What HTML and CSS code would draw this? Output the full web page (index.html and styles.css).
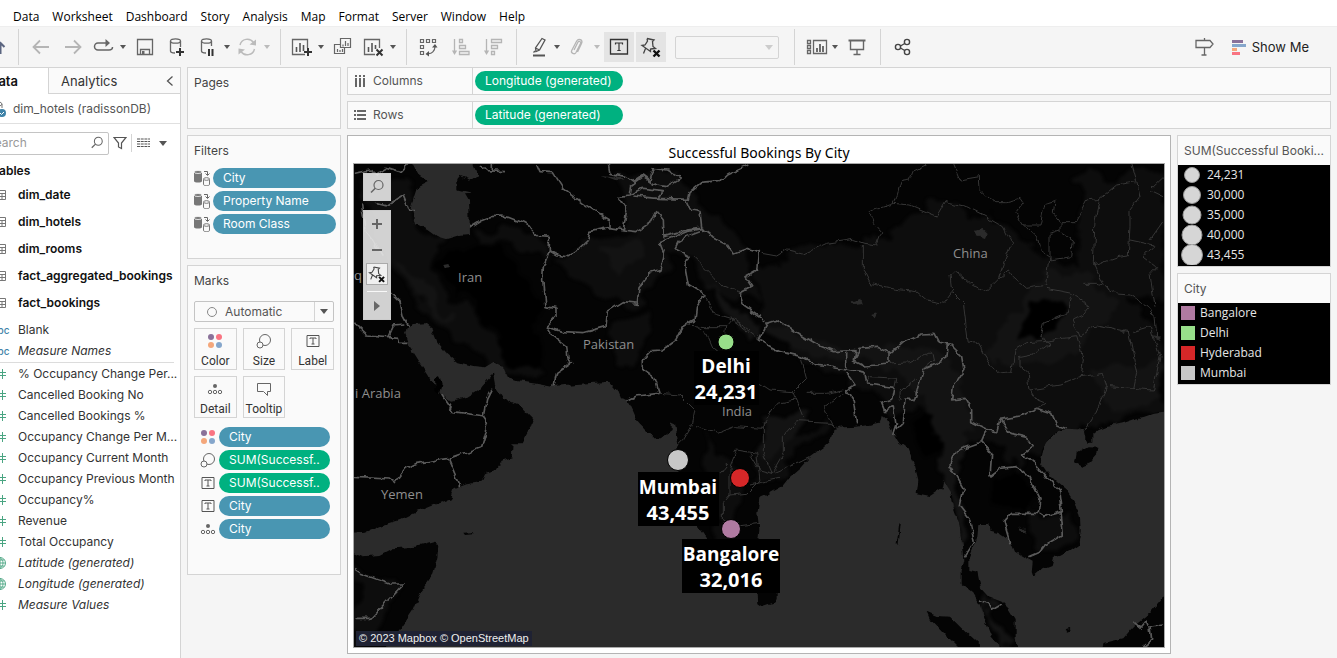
FILE: index.html
```html
<!DOCTYPE html>
<html lang="en">
<head>
<meta charset="utf-8">
<title>Successful Bookings By City</title>
<link rel="stylesheet" href="styles.css">
</head>
<body>
<svg class="sprite" aria-hidden="true">
  <symbol id="i-colors" viewBox="0 0 16 16"><circle cx="4" cy="4" r="3" fill="#8a7199"/><circle cx="12" cy="4" r="3" fill="#f97482"/><circle cx="4" cy="12" r="3" fill="#f4a77b"/><circle cx="12" cy="12" r="3" fill="#85a6cb"/></symbol>
  <symbol id="i-size" viewBox="0 0 16 16"><circle cx="9" cy="7" r="5.500" fill="none" stroke="#666"/><circle cx="4" cy="12" r="3" fill="#fafafa" stroke="#666"/></symbol>
  <symbol id="i-label" viewBox="0 0 16 16"><path d="M2 2.500h12v11H2zM5 6V5h6v1M8 5v6M6.500 11h3" fill="none" stroke="#555"/></symbol>
  <symbol id="i-detail" viewBox="0 0 16 16"><circle cx="8" cy="5" r="2" fill="#666"/><g fill="none" stroke="#666"><circle cx="3" cy="11" r="1.700"/><circle cx="8" cy="11" r="1.700"/><circle cx="13" cy="11" r="1.700"/></g></symbol>
  <symbol id="i-tooltip" viewBox="0 0 16 16"><path d="M1.500 2.500h13v8h-3v4l-4-4h-6z" fill="none" stroke="#666"/></symbol>
  <symbol id="i-context" viewBox="0 0 16 16"><path d="M0 2v9c0 2 8 2 8 0V2z" fill="#777"/><ellipse cx="4" cy="2" rx="4" ry="1.500" fill="#777" stroke="#fafafa" stroke-width=".8"/><path d="M9.500 9.500v5c0 1.500 6 1.500 6 0v-5" fill="none" stroke="#777"/><ellipse cx="12.500" cy="9" rx="3" ry="1.300" fill="none" stroke="#777"/><path d="M10 1.500h3.500V5M11.500 3.500l2 2 2-2" fill="none" stroke="#666"/></symbol>
  <symbol id="i-mag" viewBox="0 0 16 16"><circle cx="9.500" cy="6" r="4.500" fill="none" stroke="#666" stroke-width="1.200"/><path d="M6.300 9.300L2 13.500" stroke="#666" stroke-width="1.500"/></symbol>
  <symbol id="i-table" viewBox="0 0 12 12"><path d="M.5 1.500h11v9H.5zM.5 4.500h11M.5 7.500h11M4.500 4v6M8 4v6" fill="none" stroke="#777"/></symbol>
  <symbol id="i-hash" viewBox="0 0 12 12"><path d="M4.500 1v10M8.500 1v10M1 4.500h11M1 7.500h11" fill="none" stroke="#4aa582"/></symbol>
  <symbol id="i-globe" viewBox="0 0 12 12"><path d="M6 .5a5.500 5.500 0 1 0 0 11 5.500 5.500 0 1 0 0-11zM6 .5v11M.5 6h11M1.500 3h9M1.500 9h9M6 .5C2 4 2 8 6 11.500M6 .5c4 3.500 4 7.500 0 11" fill="none" stroke="#4aa582" stroke-width=".9"/></symbol>
  <symbol id="i-pin" viewBox="0 0 24 24"><path d="M8 3.500l7 1.500-1.500 1.500.5 5 2.500 2-5 .5M8 3.500l.5 2.500-2.500 4-3 .5 8.500 6v-3M6.500 13.500L4.500 18.500" fill="none" stroke="#444" stroke-width="1.300"/><path d="M14.500 15.500l6 6m0-6l-6 6" stroke="#111" stroke-width="2.400"/></symbol>
</svg>
<div class="app">
  <nav class="menu">
    <button>Data</button><button>Worksheet</button><button>Dashboard</button><button>Story</button><button>Analysis</button><button>Map</button><button>Format</button><button>Server</button><button>Window</button><button>Help</button>
  </nav>
  <div class="toolbar">
    <div class="group home"><button class="tool" aria-label="Start page"><svg viewBox="0 0 24 24"><path d="M16.500 8v11M12.500 12l4-4 4 4" fill="none" stroke="#5b6580" stroke-width="2"/></svg></button></div>
    <div class="group">
      <button class="tool" aria-label="Undo"><svg viewBox="0 0 24 24"><path d="M20 12H5M11 5.500L4.500 12l6.500 6.500" fill="none" stroke="#b5b5b5" stroke-width="1.800"/></svg></button>
      <button class="tool" aria-label="Redo"><svg viewBox="0 0 24 24"><path d="M4 12h15M13 5.500l6.500 6.500-6.500 6.500" fill="none" stroke="#b5b5b5" stroke-width="1.800"/></svg></button>
      <button class="tool" aria-label="Replay"><svg viewBox="0 0 24 24"><path d="M16 8H5a3 3 0 0 0 0 7h11c2 0 3.500-1 3.500-3" fill="none" stroke="#666" stroke-width="1.500"/><path d="M12.500 4l4.500 4-4.500 4z" fill="#666"/></svg></button><button class="caret" aria-label="Replay options"></button>
      <button class="tool" aria-label="Save"><svg viewBox="0 0 24 24"><path d="M4.500 4.500h15v15h-15zM7.500 19v-4.500h9V19" fill="none" stroke="#666" stroke-width="1.300"/><path d="M9 16h2.500v3H9z" fill="#666"/></svg></button>
      <button class="tool" aria-label="New data source"><svg viewBox="0 0 24 24"><path d="M5.500 6v10c0 1.500 2 2 4.500 2M15.500 6v6" fill="none" stroke="#666" stroke-width="1.300"/><ellipse cx="10.500" cy="6" rx="5" ry="2.200" fill="none" stroke="#666" stroke-width="1.300"/><path d="M15 13v8M11 17h8" stroke="#333" stroke-width="2"/></svg></button>
      <button class="tool" aria-label="Pause updates"><svg viewBox="0 0 24 24"><path d="M4.500 6v10c0 1.500 2 2 4.500 2M14.500 6v5" fill="none" stroke="#666" stroke-width="1.300"/><ellipse cx="9.500" cy="6" rx="5" ry="2.200" fill="none" stroke="#666" stroke-width="1.300"/><path d="M12 14v7M15.500 14v7" stroke="#333" stroke-width="2"/></svg></button><button class="caret" aria-label="Pause options"></button>
      <button class="tool" aria-label="Run update"><svg viewBox="0 0 24 24"><path d="M3 10a7.500 7.500 0 0 1 13.500-2.500M17.500 14a7.500 7.500 0 0 1-13.500 2.500" fill="none" stroke="#bbb" stroke-width="1.400"/><path d="M12.500 9.500l6.500 1v-6zM8 14.500l-6.500-1v6z" fill="#bbb"/></svg></button><button class="caret dim" aria-label="Update options"></button>
    </div>
    <div class="group">
      <button class="tool" aria-label="New worksheet"><svg viewBox="0 0 24 24"><path d="M14 19.500H1.500v-15h15V13" fill="none" stroke="#666" stroke-width="1.300"/><path d="M5.500 12v5M9 8v9M12.500 10v6" stroke="#555" stroke-width="1.600"/><path d="M17 13v8M13 17h8" stroke="#333" stroke-width="2"/></svg></button><button class="caret" aria-label="New sheet options"></button>
      <button class="tool" aria-label="Duplicate"><svg viewBox="0 0 24 24"><path d="M9.500 3.500h10v9h-10zM9 9.500H3.500v9h10V13M12 9.500v2M14.500 6v5M17 8v3M6.500 14v3M9 15v2M11.500 14v3" fill="none" stroke="#666" stroke-width="1.200"/></svg></button>
      <button class="tool" aria-label="Clear sheet"><svg viewBox="0 0 24 24"><path d="M12 19.500H1.500v-15h15V13" fill="none" stroke="#666" stroke-width="1.300"/><path d="M5.500 12v5M9 8v9M12.500 10v4" stroke="#555" stroke-width="1.600"/><path d="M13.500 14.500l6 6m0-6l-6 6" stroke="#333" stroke-width="2"/></svg></button><button class="caret" aria-label="Clear options"></button>
    </div>
    <div class="group">
      <button class="tool" aria-label="Swap rows and columns"><svg viewBox="0 0 24 24"><path d="M3.500 4.500h3v3h-3zM9.500 4.500h3v3h-3zM15.500 4.500h3v3h-3zM3.500 10.500h3v3h-3zM3.500 16.500h3v3h-3zM10 18.500c5 1 8-3 8-7" fill="none" stroke="#666" stroke-width="1.200"/><path d="M15 12.500h5.500l-2.500-3.500zM12 16v5.500L8.500 19z" fill="#555"/></svg></button>
      <button class="tool" aria-label="Sort ascending"><svg viewBox="0 0 24 24"><path d="M5.500 4v14M10.500 4.500h3v3h-3zM10.500 10.500h6v3h-6zM10.500 16.500h9.500v3h-9.500z" fill="none" stroke="#b5b5b5" stroke-width="1.300"/><path d="M3 15.500h5.200L5.500 20z" fill="#b5b5b5"/></svg></button>
      <button class="tool" aria-label="Sort descending"><svg viewBox="0 0 24 24"><path d="M5.500 4v14M10.500 4.500h10v3h-10zM10.500 10.500h6v3h-6zM10.500 16.500h3v3h-3z" fill="none" stroke="#b5b5b5" stroke-width="1.300"/><path d="M3 15.500h5.200L5.500 20z" fill="#b5b5b5"/></svg></button>
    </div>
    <div class="group">
      <button class="tool" aria-label="Highlight"><svg viewBox="0 0 24 24"><path d="M15 3.500l3 1.500-5.500 10-3.500 1.500-.5-3.500zM8.500 13l4 2M8 16l-1.500 1.500" fill="none" stroke="#555" stroke-width="1.300"/><path d="M6 20.500h12" stroke="#555" stroke-width="2"/></svg></button><button class="caret" aria-label="Highlight options"></button>
      <button class="tool" aria-label="Group members"><svg viewBox="0 0 24 24"><path d="M7 15l4-8c1-1.500 3.300-.3 2.500 1.500l-4.500 9c-1.500 2.500-5.500.6-4.300-2l5-9.500c2-3.300 6.500-1 4.800 2.500L10.500 17" fill="none" stroke="#b5b5b5" stroke-width="1.300"/></svg></button><button class="caret dim" aria-label="Group options"></button>
      <button class="tool on" aria-label="Show mark labels"><svg viewBox="0 0 24 24"><path d="M3.500 4.500h17v14.500h-17z" fill="none" stroke="#333" stroke-width="1.300"/><path d="M8.500 9.500V8h7v1.500M12 8v7.500M10.300 15.500h3.400" fill="none" stroke="#333" stroke-width="1.200"/></svg></button>
      <button class="tool on" aria-label="Fix axes"><svg viewBox="0 0 24 24"><use href="#i-pin"/></svg></button>
      <label class="fit"><select aria-label="Fit" disabled><option></option></select><i class="tri"></i></label>
    </div>
    <div class="group">
      <button class="tool" aria-label="Show or hide cards"><svg viewBox="0 0 24 24"><path d="M2.500 5.500h3v3h-3zM2.500 10.500h3v3h-3zM2.500 15.500h3v3h-3zM8.500 5.500h13v13h-13z" fill="none" stroke="#666" stroke-width="1.300"/><path d="M12 13v4M15 9v8M18 11v6" stroke="#555" stroke-width="1.700"/></svg></button><button class="caret" aria-label="Card options"></button>
      <button class="tool" aria-label="Presentation mode"><svg viewBox="0 0 24 24"><path d="M5.500 6v8.500h13V6M12 14.500v5M8.500 19.500h7" fill="none" stroke="#666" stroke-width="1.400"/><path d="M3.500 5.500h17" stroke="#666" stroke-width="2"/></svg></button>
    </div>
    <div class="group">
      <button class="tool" aria-label="Share"><svg viewBox="0 0 24 24"><g fill="none" stroke="#444" stroke-width="1.400"><circle cx="7" cy="12" r="2.600"/><circle cx="16" cy="7" r="2.600"/><circle cx="16" cy="17" r="2.600"/><path d="M9.500 11l4.200-2.500M9.500 13l4.200 2.500"/></g></svg></button>
    </div>
    <div class="right">
      <button class="tool" aria-label="Guide"><svg viewBox="0 0 24 24"><path d="M4 5.500h14l3 3.500-3 3.500H4zM12.500 3v2.500M12.500 12.500V20M9.500 20h5" fill="none" stroke="#666" stroke-width="1.300"/></svg></button>
      <button class="showme"><svg viewBox="0 0 14 15"><path d="M0 0h11v3H0z" fill="#8a7199"/><path d="M0 4h14v3H0z" fill="#85a6cb"/><path d="M0 8h5v3H0z" fill="#f4a77b"/><path d="M0 12h8v3H0z" fill="#f97482"/></svg>Show Me</button>
    </div>
  </div>

  <div class="work">
    <aside class="side">
      <div class="tabs"><button class="tab active">Data</button><button class="tab">Analytics</button><button class="fold" aria-label="Collapse"><svg viewBox="0 0 8 10"><path d="M6.500.5L1.500 5l5 4.500" fill="none" stroke="#555" stroke-width="1.300"/></svg></button></div>
      <div class="source"><svg viewBox="0 0 14 16"><path d="M1 3v8M9 3v4" stroke="#777"/><ellipse cx="5" cy="3" rx="4" ry="2" fill="none" stroke="#777"/><circle cx="9" cy="12" r="4" fill="#3f83a8"/><path d="M7 12l1.500 1.500L11 11" fill="none" stroke="#fff"/></svg><span>dim_hotels (radissonDB)</span></div>
      <div class="find">
        <label class="search"><input type="text" placeholder="Search" aria-label="Search"><svg viewBox="0 0 16 16"><use href="#i-mag"/></svg></label>
        <button class="fi" aria-label="Filter"><svg viewBox="0 0 14 14"><path d="M1 1.500h12L8.500 7v5.500l-3-1.500V7z" fill="none" stroke="#555" stroke-width="1.200"/></svg></button>
        <button class="fi view" aria-label="View"><svg viewBox="0 0 13 10"><path d="M0 1h13M0 3.500h13M0 6h13M0 8.500h13" stroke="#555" stroke-width="1.200" stroke-dasharray="3 .7"/></svg><i class="tri"></i></button>
      </div>
      <h2>Tables</h2>
      <ul class="tables">
        <li><svg><use href="#i-table"/></svg>dim_date</li>
        <li><svg><use href="#i-table"/></svg>dim_hotels</li>
        <li><svg><use href="#i-table"/></svg>dim_rooms</li>
        <li><svg><use href="#i-table"/></svg>fact_aggregated_bookings</li>
        <li><svg><use href="#i-table"/></svg>fact_bookings</li>
      </ul>
      <ul class="fields">
        <li><b>Abc</b>Blank</li>
        <li class="gen"><b>Abc</b>Measure Names</li>
      </ul>
      <ul class="fields measures">
        <li><svg><use href="#i-hash"/></svg>% Occupancy Change Per...</li>
        <li><svg><use href="#i-hash"/></svg>Cancelled Booking No</li>
        <li><svg><use href="#i-hash"/></svg>Cancelled Bookings %</li>
        <li><svg><use href="#i-hash"/></svg>Occupancy Change Per M...</li>
        <li><svg><use href="#i-hash"/></svg>Occupancy Current Month</li>
        <li><svg><use href="#i-hash"/></svg>Occupancy Previous Month</li>
        <li><svg><use href="#i-hash"/></svg>Occupancy%</li>
        <li><svg><use href="#i-hash"/></svg>Revenue</li>
        <li><svg><use href="#i-hash"/></svg>Total Occupancy</li>
        <li class="gen"><svg><use href="#i-globe"/></svg>Latitude (generated)</li>
        <li class="gen"><svg><use href="#i-globe"/></svg>Longitude (generated)</li>
        <li class="gen"><svg><use href="#i-hash"/></svg>Measure Values</li>
      </ul>
    </aside>

    <div class="cards">
      <section class="card pages"><h3>Pages</h3></section>
      <section class="card filters"><h3>Filters</h3>
        <div class="pills">
          <div class="row"><svg><use href="#i-context"/></svg><button class="pill">City</button></div>
          <div class="row"><svg><use href="#i-context"/></svg><button class="pill">Property Name</button></div>
          <div class="row"><svg><use href="#i-context"/></svg><button class="pill">Room Class</button></div>
        </div>
      </section>
      <section class="card marks"><h3>Marks</h3>
        <label class="type"><i class="ring"></i><select aria-label="Mark type"><option>Automatic</option></select><i class="tri"></i></label>
        <div class="props">
          <button><svg><use href="#i-colors"/></svg>Color</button>
          <button><svg><use href="#i-size"/></svg>Size</button>
          <button><svg><use href="#i-label"/></svg>Label</button>
          <button><svg><use href="#i-detail"/></svg>Detail</button>
          <button><svg><use href="#i-tooltip"/></svg>Tooltip</button>
        </div>
        <div class="pills inset">
          <div class="row"><svg><use href="#i-colors"/></svg><button class="pill">City</button></div>
          <div class="row"><svg><use href="#i-size"/></svg><button class="pill green">SUM(Successf..</button></div>
          <div class="row"><svg><use href="#i-label"/></svg><button class="pill green">SUM(Successf..</button></div>
          <div class="row"><svg><use href="#i-label"/></svg><button class="pill">City</button></div>
          <div class="row"><svg><use href="#i-detail"/></svg><button class="pill">City</button></div>
        </div>
      </section>
    </div>

    <main class="main">
      <div class="shelf"><span class="name"><svg viewBox="0 0 12 12"><path d="M2 0v2M6 0v2M10 0v2M2 3v9M6 3v9M10 3v9" stroke="#666" stroke-width="2"/></svg>Columns</span><button class="pill green">Longitude (generated)</button></div>
      <div class="shelf"><span class="name"><svg viewBox="0 0 12 12"><path d="M0 2h2M0 6h2M0 10h2M3 2h9M3 6h9M3 10h9" stroke="#666" stroke-width="2"/></svg>Rows</span><button class="pill green">Latitude (generated)</button></div>
      <div class="lower">
        <section class="sheet">
          <h1>Successful Bookings By City</h1>
          <div class="map">
            <svg class="canvas" viewBox="0 0 810 483" preserveAspectRatio="xMidYMid slice" role="img" aria-label="Map of bookings by city">
              <defs>
                <filter id="rough" filterUnits="userSpaceOnUse" x="0" y="0" width="2460" height="1480" color-interpolation-filters="sRGB"><feTurbulence type="fractalNoise" baseFrequency=".035" numOctaves="2" seed="4"/><feDisplacementMap in="SourceGraphic" scale="20" xChannelSelector="R" yChannelSelector="G"/></filter>
                <filter id="soft" filterUnits="userSpaceOnUse" x="0" y="0" width="2460" height="1480" color-interpolation-filters="sRGB"><feTurbulence type="fractalNoise" baseFrequency=".012" numOctaves="3" seed="9"/><feDisplacementMap in="SourceGraphic" scale="90" xChannelSelector="R" yChannelSelector="G"/><feGaussianBlur stdDeviation="5"/></filter>
                <clipPath id="land-clip"><use href="#land"/></clipPath>
              </defs>
              <rect width="810" height="483" fill="#2b2b2b"/>
              <g transform="translate(-4 -4) scale(.333333)">
                <g filter="url(#rough)">
                  <path id="land" fill="#040404" d="M0 0H2460V752L2415 758 2380 770 2350 778 2320 788 2270 798 2245 808 2230 820V848H2212L2205 815 2185 808 2150 806 2125 812 2105 828 2088 848 2076 870 2070 905 2090 935 2120 965 2155 995 2178 1030 2190 1075 2192 1110 2185 1155 2160 1172 2130 1188 2112 1190 2105 1215 2080 1225 2050 1250 2045 1235 2048 1205 2020 1190 1995 1175 1980 1140 1950 1120 1918 1112 1915 1092H1885L1882 1130 1872 1160 1858 1195V1230L1882 1235 1892 1285 1915 1310 1955 1325 1975 1345 1997 1380V1440L2012 1480H1970L1925 1430 1905 1380 1890 1335 1870 1300 1832 1270V1235L1840 1200 1835 1150 1828 1090 1810 1040 1805 1000 1780 960 1775 985 1740 1008 1700 1000 1705 960 1695 920 1680 890 1670 865 1645 845 1630 820 1612 780 1595 768 1590 788 1555 795 1520 800 1480 802 1450 810 1448 835 1415 865 1380 890 1350 925 1315 955 1295 980 1250 1005 1228 1015 1222 1060 1228 1110 1220 1180 1190 1290H1165L1120 1210 1070 1135 1045 1098 1000 1000 985 930V855L975 790 965 785V810L935 832H908L880 805 858 780 845 750 838 735 830 720 810 715 800 690 778 665 735 668 680 672 610 678 560 668 500 660 470 650 460 620 430 605 405 622 370 618 320 605 290 580 262 545 245 505 225 490 190 492 170 500 165 520 180 560 205 600 235 645 255 685 275 705 300 722 350 712 385 690 415 655 432 640 440 685 460 715 495 732 518 742 550 775 540 805 515 850 488 850 485 895 455 905 440 930 405 940 395 962 350 970 310 985 300 1018 250 1035 190 1060 150 1080 100 1095 50 1115 0 1118zM0 1175L40 1192 85 1188 130 1165 200 1160 255 1145 265 1150 262 1195 250 1240 215 1290 190 1350 150 1410 95 1480H0zM1222 1290L1280 1295 1280 1318 1265 1332 1240 1340 1225 1330zM2180 880L2210 862 2245 863 2242 885 2220 910 2195 920 2175 910zM1730 1355L1760 1368 1800 1370 1850 1420 1895 1461V1480H1840L1790 1430 1740 1378zM2260 1450L2320 1435 2350 1400 2400 1360 2442 1310H2460V1480H2255zM340 1118L370 1117 368 1123 345 1125zM1648 1090l4 2-6 60-6 2zM2150 1406l10-2 2 8-8 3z"/>
                </g>
                <g clip-path="url(#land-clip)"><g filter="url(#soft)">
                  <path fill="#0d0d0d" d="M30 40L180 60 200 200 300 250 240 330 330 430 460 560 600 640 540 650 420 600 300 500 200 420 100 300zM370 200L580 230 590 300 480 250 380 260zM600 290L780 220 940 210 950 330 860 420 780 430 650 350zM790 40H980L1040 130 1200 260 1220 430 1100 400 1010 290 830 200zM780 500L900 430 880 640 800 620zM1350 270L1540 250 1780 130 1950 180 2100 300 2250 350 2440 520V760L2200 800 2080 860 1960 1000 2040 1060 2160 1080 2180 1150 2060 1180 2000 900 1900 840 1760 840 1700 720 1640 800 1600 720 1350 600 1230 480 1220 330zM1220 850L1440 800 1300 930 1220 1000zM1060 830L1200 980 1100 1160zM2180 60L2440 30V420L2200 400zM12 1230L160 1280 60 1440H12z"/>
                  <path fill="#131313" d="M1230 480L1500 570 1720 540 1800 580 1840 680 1900 800 1840 850 1820 1000 1860 1130 1830 1150 1760 900 1720 700 1600 610 1430 600 1250 530zM2080 330L2240 360 2300 430 2240 500 2150 600 1960 640 1900 580zM2220 640L2440 600V720L2280 760zM130 300L250 400 320 480 200 410zM740 270l120-30 20 60-90 40zM1090 380l130 110v50l-80-60zM1240 780l130-30-60 120-60 20zM1900 1310L2010 1460 1960 1480z"/>
                  <path fill="#000" d="M320 270L460 270 560 420 570 620 480 600 400 470 260 320zM2030 430l80-20 50 30-60 80-80 20zM1720 770l30 0 10 60-30 40-20-40zM1920 960l80-30 60 80-40 40-90-20z"/>
                </g></g>
                <g filter="url(#rough)">
                  <path fill="#2b2b2b" d="M180 0L205 45 235 65 205 80 195 110 185 150 195 190 235 210 260 228 290 237 330 225 360 222 357 120 345 100 365 98 322 88V60L330 50 360 62 382 45 365 0zM1875 212l20-5 15 15-5 12-25-8zM1505 425l25-8 5 15-22 3zM1560 465l25-5-8 15zM280 315l15-3 5 12-15 2zM755 45l50 5 20 12-30-2zM2405 525l30 5-5 14zM2310 515l12-8-3 20zM2005 1095l20 15 8 12-20-10z"/>
                  <path fill="#000" d="M252 655l15-10 8 30-8 25-14-10z"/>
                  <g fill="none" stroke="#5a5a5a" stroke-width="5" stroke-linejoin="round">
                    <path d="M357 203L395 180 420 170 450 168 475 172 520 190 545 205 570 230 598 232V272L620 285 650 290 690 265 712 245 720 215 775 203 820 210 860 215 905 185 920 155 940 180 942 230 1010 210 1050 205M598 272L580 320 578 360 585 440 618 445 618 470 588 500 600 520 650 560 655 600 665 610 620 640 612 678M588 500L640 515 700 518 768 500 772 455 820 425 865 430 870 380 900 340 930 330 942 270 932 245 1010 215 1060 205"/>
                    <path d="M560 12L570 35 610 38 640 85 700 130 745 160 780 180 780 203M390 12L410 32 465 35M427 12V35M775 12L780 40 830 50 850 65 880 45 900 60 910 25 950 30 990 55 950 80 920 75 880 50 845 75 840 105 805 110 830 150 820 210M840 105L880 85 940 92 920 115 850 108M920 115L1015 118 1020 95 1050 70 1110 65 1130 45 1195 15M1005 118L1020 150 1050 155 1055 205 1080 225 1130 250 1150 280 1190 265 1225 275 1220 330 1185 350 1205 380 1170 400 1180 435 1230 470"/>
                    <path d="M985 245L1010 230 1050 215M985 245L975 265 1020 290 1005 320 1015 375 1065 405 1040 440 1035 480 1000 500 980 540 940 570 905 572 880 600 880 630 910 650 925 700 860 708 830 722M1200 455L1250 490 1280 480 1350 525 1400 555 1450 575 1515 572 1510 600 1530 565 1580 562 1620 580 1660 545 1710 522 1755 520 1770 550 1800 555 1835 590 1842 630 1810 680 1805 720 1845 715 1865 750 1865 785 1910 808 1940 815 1950 778 2010 768 2060 745 2105 760 2120 795 2150 806M1250 490L1225 540 1290 575 1360 592 1400 615 1490 630 1490 575M1510 600L1545 618 1620 612 1620 580M1490 630L1545 640 1550 672 1632 682 1625 720 1595 730 1605 755 1630 735 1640 810 1660 790 1665 720 1692 722 1722 625 1790 595 1795 555M1490 640L1515 675 1490 690 1510 720 1520 790M1640 790L1628 825"/>
                    <path d="M1910 810L1895 845 1820 872 1800 915 1840 985 1828 1035 1858 1075 1873 1145 1843 1192M1895 845L1925 880 1920 948 1950 925 2000 920 2040 955 2070 1015 2065 1060 1985 1060 1962 1085 1980 1150M1950 778L1980 820 2030 832 2048 860 2015 885 2060 915 2130 995 2137 1055 2080 1070 2065 1060M2130 1055L2137 1125 2085 1155 2070 1175 2035 1190M1890 1320L1920 1330 1930 1348 1952 1335M2350 1385L2370 1402 2388 1380 2395 1395M2380 1461L2405 1440 2400 1398 2442 1392"/>
                    <path d="M12 490L50 525 145 532 150 550 175 550M115 528L130 495 160 492M35 130L45 210 70 240 100 290M120 395L150 425 160 470 175 498M12 40L60 30 80 45 110 25 150 38 175 12M80 130L110 138 160 105 180 155 195 155M275 705L310 755 400 768 410 715 425 685M400 768L415 790 395 860 295 895 200 910 165 928 135 968 120 957 12 952M295 895L330 978M12 1228L30 1240 120 1272H160L62 1375H12"/>
                  </g>
                  <g fill="none" stroke="#363636" stroke-width="3" stroke-linejoin="round">
                    <path d="M1235 280L1280 288 1310 270 1360 282 1430 250 1510 238 1545 250 1580 255 1595 215 1570 185 1560 155 1630 130 1650 65 1680 60 1690 35 1730 15M1630 130L1680 135 1760 168 1785 125 1850 140 1900 165 1960 200 1985 250 1960 310 1945 355 1905 395 1860 370 1820 335 1800 345 1805 395 1780 430 1730 420 1700 395 1640 388 1560 370 1540 330 1540 255M1805 395L1840 430 1855 550 1880 545 1900 580 1940 640 1985 635 1995 570 2030 548 2080 545 2140 535 2180 530 2200 600 2195 640"/>
                    <path d="M1810 12L1830 60 1888 50 1890 90 1930 125 1970 125 2010 115 2020 130 1998 160 2020 195 2070 195 2085 130 2115 122 2110 160 2130 185 2175 185 2210 120 2250 115 2300 75 2360 65 2345 12M2250 115L2235 180 2230 310 2260 375 2300 402 2340 405 2390 440 2415 470 2420 530M2230 315L2300 290 2335 285 2340 200 2340 150 2370 110 2360 65M2020 195L2060 230 2070 270 2100 290 2090 375 2030 385 1990 350 1975 330 1945 355M2130 185L2130 215 2170 240 2165 290 2100 300 2100 220 2130 210M2340 240L2410 255 2380 290 2420 320 2400 340 2415 440M2090 385L2165 400 2220 440 2200 465 2170 480 2190 530 2240 495 2335 515 2345 560 2360 640 2350 690M2442 180L2400 240M2442 50L2400 90 2442 110M2165 410L2150 460 2080 490 2070 530 2100 550 2060 580 2010 590 2010 620 2035 640 2040 690 2130 675 2190 650 2260 640 2270 680 2230 770 2205 810M2040 690L2060 720 2085 730 2060 745M2350 515L2400 500 2430 590 2410 690 2280 680M2200 370L2240 370 2260 375"/>
                    <path d="M1035 295L1090 350 1110 375 1170 400M1065 405L1090 460 1140 475 1190 510 1230 540M1010 495L1060 500 1130 500 1125 540M1040 500L1070 520 1090 565 1120 590M1130 500L1150 475 1200 510M925 700L990 705 1035 750 1025 800 1000 840 985 855M1035 800L1100 820 1150 800 1240 805M1355 600L1370 655 1330 695 1260 690 1230 670M1330 695L1340 720 1280 730 1240 790 1240 880 1265 940 1300 880 1300 830 1340 785 1440 790 1460 805M1340 720L1360 770M1370 700L1430 700 1480 690M1480 700L1420 740 1450 800M1265 940L1350 905 1380 890M1550 672L1560 650 1640 655 1635 680M1620 612L1680 608 1745 575 1750 600 1720 625M1650 720L1655 690 1700 655M1200 880L1230 930 1265 940M1160 870L1220 880 1230 960 1190 1000 1140 1005 1140 920zM1140 1005L1120 1030 1120 1080 1150 1100 1230 1090M1200 975L1290 955M1130 915L1110 940"/>
                  </g>
                </g>
              </g>
              <g class="place">
                <text x="104" y="118">Iran</text><text x="229" y="185">Pakistan</text><text x="599" y="94">China</text><text x="368" y="252">India</text><text x="27" y="335">Yemen</text><text x="1" y="234">i Arabia</text><text x="0" y="116">q</text>
              </g>
              <g class="plate"><rect x="340" y="187" width="65" height="54"/><rect x="284" y="308" width="81" height="54"/><rect x="328" y="375" width="98" height="54"/></g>
              <g stroke="#000" stroke-width="1"><circle cx="372" cy="178" r="8" fill="#98df8a"/><circle cx="324" cy="296" r="10.500" fill="#c7c7c7"/><circle cx="386" cy="314" r="9.500" fill="#d62728"/><circle cx="377" cy="365" r="9.500" fill="#b07aa1"/></g>
              <g class="mark">
                <text class="city" x="372" y="209">Delhi</text><text x="372" y="235">24,231</text>
                <text class="city" x="324" y="330">Mumbai</text><text x="324" y="356">43,455</text>
                <text class="city" x="377" y="397">Bangalore</text><text x="377" y="423">32,016</text>
              </g>
            </svg>
            <div class="controls">
              <button class="msearch" aria-label="Search map"><svg viewBox="0 0 16 16"><use href="#i-mag"/></svg></button>
              <div class="mzoom">
                <button aria-label="Zoom in"><svg viewBox="0 0 12 12"><path d="M6 1v10M1 6h10" stroke="#666" stroke-width="2"/></svg></button>
                <button aria-label="Zoom out"><svg viewBox="0 0 12 12"><path d="M1 6h10" stroke="#666" stroke-width="2"/></svg></button>
                <button class="mpin" aria-label="Reset map"><svg viewBox="0 0 24 24"><use href="#i-pin"/></svg></button>
                <button class="mplay" aria-label="Map tools"><svg viewBox="0 0 12 12"><path d="M3 1l6 5-6 5z" fill="#666"/></svg></button>
              </div>
            </div>
            <div class="credit">© 2023 Mapbox © OpenStreetMap</div>
          </div>
        </section>
        <aside class="legends">
          <section class="legend"><h3>SUM(Successful Booki...</h3>
            <ul class="sizes">
              <li><svg viewBox="0 0 22 20"><circle cx="11" cy="10" r="7.500"/></svg>24,231</li>
              <li><svg viewBox="0 0 22 20"><circle cx="11" cy="10" r="8.500"/></svg>30,000</li>
              <li><svg viewBox="0 0 22 20"><circle cx="11" cy="10" r="9"/></svg>35,000</li>
              <li><svg viewBox="0 0 22 20"><circle cx="11" cy="10" r="10"/></svg>40,000</li>
              <li><svg viewBox="0 0 22 20"><circle cx="11" cy="10" r="10.500"/></svg>43,455</li>
            </ul>
          </section>
          <section class="legend"><h3>City</h3>
            <ul class="swatches">
              <li><i class="c1"></i>Bangalore</li><li><i class="c2"></i>Delhi</li><li><i class="c3"></i>Hyderabad</li><li><i class="c4"></i>Mumbai</li>
            </ul>
          </section>
        </aside>
      </div>
    </main>
  </div>
</div>
</body>
</html>
```
FILE: styles.css
```css
* { box-sizing: border-box; }
body { margin: 0; overflow: hidden; background: #f5f5f5; font: 12px/16px Inter, "Liberation Sans", sans-serif; color: #333; }
button, select, input { font: inherit; color: inherit; }
button { border: 0; padding: 0; background: none; }
h1, h2, h3, ul { margin: 0; padding: 0; font-weight: 400; }
ul { list-style: none; }
svg { display: block; flex: none; }
.sprite { position: absolute; width: 0; height: 0; }

/* the window hangs slightly over the left screen edge */
.app { display: flex; flex-direction: column; height: 100vh; min-height: 640px; margin-left: -16px; }

.menu { display: flex; gap: 13px; height: 26px; padding: 8px 0 0 29px; background: #fff; font: 12px/18px "Open Sans", "Noto Sans", sans-serif; color: #000; }
.menu button { line-height: 18px; height: 18px; }

.toolbar { display: flex; align-items: stretch; border-top: 1px solid #eee; padding: 2px 28px 2px 0; height: 41px; }
.group { display: flex; align-items: center; gap: 8px; padding: 0 11px 0 10px; border-left: 1px solid #d4d4d4; }
.group.home { border: 0; padding: 0 10px 0 0; }
.tool { width: 24px; height: 30px; display: grid; place-items: center; }
.tool svg { width: 24px; height: 24px; }
.tool.on { width: 30px; margin: 0 -3px; background: #e4e4e4; }
.caret { width: 12px; height: 24px; margin: 0 -4px 0 -8px; display: grid; place-items: center; }
.caret::before, .tri { content: ""; width: 0; height: 0; border: 3px solid transparent; border-top: 4px solid #555; border-bottom: 0; }
.tri { border-width: 5px 4px 0; }
.caret.dim::before { border-top-color: #bbb; }
.fit { display: flex; align-items: center; width: 104px; height: 23px; margin: 0 4px; padding-right: 5px; border: 1px solid #d4d4d4; border-radius: 2px; }
.fit select { flex: 1; width: 0; height: 21px; border: 0; background: none; appearance: none; }
.fit .tri { border-top-color: #ccc; }
.right { display: flex; align-items: center; gap: 16px; margin-left: auto; }
.showme { display: flex; align-items: center; gap: 6px; font: 13px/16px Inter, sans-serif; color: #222; }
.showme svg { width: 14px; height: 15px; }

.work { flex: 1; display: flex; gap: 6px; min-height: 0; padding-right: 6px; }
.side { width: 197px; flex: none; background: #fff; border: 1px solid #d4d4d4; border-width: 1px 1px 0 0; overflow: hidden; }
.tabs { display: flex; height: 26px; font-size: 13px; }
.tab { padding: 0 12px; border: solid #d4d4d4; border-width: 0 0 1px 1px; background: #fafafa; line-height: 24px; }
.tab.active { width: 64px; padding: 0 30px 0 0; background: #fff; border: 0; text-align: right; font-weight: 600; color: #111; }
.fold { flex: 1; background: #fafafa; border-bottom: 1px solid #d4d4d4; display: grid; place-items: center end; padding-right: 6px; }
.fold svg { width: 8px; height: 10px; }
.source { display: flex; align-items: center; gap: 6px; height: 30px; padding-left: 9px; border-bottom: 1px solid #e0e0e0; color: #555; white-space: nowrap; }
.source svg { width: 14px; height: 16px; }
.find { display: flex; align-items: center; height: 38px; gap: 4px; }
.search { display: flex; align-items: center; width: 125px; height: 23px; border: 1px solid #c4c4c4; border-radius: 2px; padding-right: 4px; }
.search input { flex: 1; width: 0; border: 0; padding: 0 0 0 2px; outline: 0; background: none; }
.search input::placeholder { color: #999; }
.search svg { width: 14px; height: 14px; }
.fi { display: flex; align-items: center; gap: 9px; height: 18px; }
.fi svg { width: 14px; height: 14px; }
.fi.view { border-left: 1px solid #d4d4d4; padding-left: 5px; }
.fi.view svg { width: 13px; height: 10px; }
.side h2 { padding: 1px 0 2px 8px; font-size: 12px; line-height: 16px; font-weight: 600; color: #111; }
.side li { display: flex; align-items: center; gap: 12px; height: 21px; padding-left: 10px; white-space: nowrap; }
.side li svg { width: 12px; height: 12px; }
.side .tables li { height: 27px; font-weight: 600; color: #111; }
.fields { margin-right: 6px; padding: 3px 0 1px; border-bottom: 1px solid #dcdcdc; }
.fields.measures { border: 0; padding: 0; margin: 0; }
.fields b { width: 20px; margin: 0 -4px; text-align: center; font: 500 10px/16px Inter, sans-serif; color: #3f83a8; }
.gen { font-style: italic; }

.cards { display: flex; flex-direction: column; gap: 6px; width: 154px; flex: none; }
.card { border: 1px solid #d4d4d4; background: #fafafa; padding: 7px 4px 0 6px; }
.card h3, .legend h3 { font-size: 12px; line-height: 16px; color: #444; }
.pages { height: 62px; }
.filters { height: 124px; }
.marks { height: 310px; }
.pills { display: grid; gap: 3px; margin-top: 9px; }
.row { display: flex; align-items: center; gap: 3px; }
.row svg { width: 16px; height: 16px; }
.pill { flex: 1; height: 20px; padding: 0 10px; border-radius: 10px; background: #4996b2; color: #fff; text-align: left; white-space: nowrap; line-height: 20px; }
.pill.green { background: #00b180; }
.type { display: flex; align-items: center; height: 21px; margin: 12px 2px 0 0; border: 1px solid #c4c4c4; border-radius: 2px; padding: 0 5px 0 12px; background: #fafafa; color: #555; }
.ring { width: 10px; height: 10px; border: 1px solid #888; border-radius: 50%; }
.type select { flex: 1; width: 0; height: 19px; appearance: none; border: 0; border-right: 1px solid #d4d4d4; background: none; padding: 0 0 0 8px; margin-right: 5px; outline: 0; font: 12px/16px Inter, sans-serif; }
.props { display: grid; grid-template-columns: repeat(3, 1fr); gap: 6px; margin: 6px 2px 0 0; }
.props button { min-width: 0; height: 42px; border: 1px solid #d4d4d4; background: #fafafa; display: flex; flex-direction: column; align-items: center; justify-content: flex-end; gap: 4px; font: 12px/16px Roboto, sans-serif; }
.props svg { width: 16px; height: 16px; }
.pills.inset { padding: 0 6px; }

.main { flex: 1; min-width: 0; display: flex; flex-direction: column; gap: 6px; padding-bottom: 4px; }
.shelf { display: flex; align-items: center; height: 28px; flex: none; border: 1px solid #d4d4d4; background: #fafafa; }
.name { display: flex; align-items: center; gap: 7px; width: 125px; height: 26px; padding-left: 6px; border-right: 1px solid #d4d4d4; color: #555; }
.name svg { width: 12px; height: 12px; }
.shelf .pill { flex: none; width: 148px; margin-left: 2px; }
.lower { flex: 1; display: flex; gap: 6px; min-height: 0; }
.sheet { flex: 1; min-width: 0; display: flex; flex-direction: column; border: 1px solid #b4b4b4; background: #fff; padding: 0 5px 5px; }
.sheet h1 { padding: 7px 0 0; font: 14px/20px "Noto Sans", "Open Sans", sans-serif; color: #000; text-align: center; }
.map { position: relative; flex: 1; min-height: 0; border: 1px solid #aaa; overflow: hidden; background: #2b2b2b; }
.canvas { width: 100%; height: 100%; }
.place { font: 13px "Open Sans", sans-serif; fill: #8f8f8f; }
.mark { font: 700 20px "Open Sans", sans-serif; fill: #fff; text-anchor: middle; }
.mark .city { font-size: 19px; }
.controls { position: absolute; top: 9px; left: 9px; width: 28px; display: grid; gap: 9px; }
.controls button { display: grid; place-items: center; }
.msearch { height: 28px; background: #e8e8e8e6; border: 1px solid #ccc; }
.msearch svg { width: 16px; height: 16px; }
.mzoom { display: grid; justify-items: center; background: #e8e8e8e6; border: 1px solid #ccc; height: 110px; grid-template-rows: 26px 26px 24px 1fr; }
.mzoom svg { width: 12px; height: 12px; }
.mzoom .mpin { width: 22px; height: 22px; background: #f0f0f0; border: 1px solid #aaa; }
.mzoom .mpin svg { width: 20px; height: 20px; }
.mzoom .mplay { width: 20px; margin-top: 4px; border-top: 1px solid #f8f8f8; }
.credit { position: absolute; left: 2px; bottom: 1px; padding: 0 3px; background: #1f2233; color: #eee; font: 11px/15px "Liberation Sans", sans-serif; }

.legends { width: 154px; flex: none; display: flex; flex-direction: column; gap: 6px; }
.legend { border: 1px solid #d4d4d4; background: #fafafa; }
.legend h3 { padding: 7px 6px 6px; color: #555; white-space: nowrap; }
.legend ul { background: #000; color: #e6e6e6; font: 12px/20px "Open Sans", "Noto Sans", sans-serif; }
.legend li { display: flex; align-items: center; height: 20px; }
.sizes { padding-bottom: 1px; }
.sizes li { gap: 4px; padding-left: 3px; }
.sizes svg { width: 22px; height: 20px; fill: #d6d6d6; stroke: #9a9a9a; stroke-width: 1; }
.swatches { padding-bottom: 1px; }
.swatches li { gap: 5px; padding-left: 3px; }
.swatches i { width: 14px; height: 14px; }
.c1 { background: #b07aa1; }
.c2 { background: #98df8a; }
.c3 { background: #d62728; }
.c4 { background: #c7c7c7; }
```
